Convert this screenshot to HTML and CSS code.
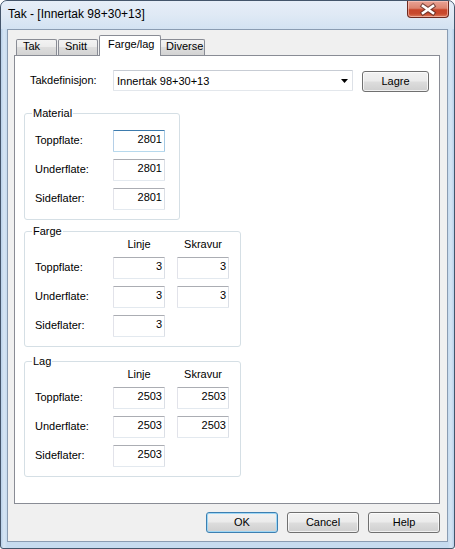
FILE: index.html
```html
<!DOCTYPE html>
<html>
<head>
<meta charset="utf-8">
<link rel="stylesheet" href="styles.css">
</head>
<body>
<div class="window">
  <div class="titlebar">
    <span class="title">Tak - [Innertak 98+30+13]</span>
    <div class="close">
      <svg width="40" height="15" viewBox="0 0 40 15">
        <path d="M15 4 L25 11 M25 4 L15 11" stroke="#5a2e28" stroke-width="4.6" stroke-linecap="square" fill="none" opacity="0.75"/>
        <path d="M15 4 L25 11 M25 4 L15 11" stroke="#ffffff" stroke-width="2.6" stroke-linecap="square" fill="none"/>
      </svg>
    </div>
  </div>
  <div class="client">
    <div class="tabs">
      <div class="tab t-tak">Tak</div>
      <div class="tab t-snitt">Snitt</div>
      <div class="tab active">Farge/lag</div>
      <div class="tab t-div">Diverse</div>
    </div>
    <div class="panel">
      <div class="defrow">
        <span class="deflabel">Takdefinisjon:</span>
        <div class="combo">
          <span>Innertak 98+30+13</span>
          <svg class="arrow" width="7" height="4" viewBox="0 0 7 4"><polygon points="0,0 7,0 3.5,4" fill="#000"/></svg>
        </div>
        <div class="btn lagre">Lagre</div>
      </div>

      <div class="group g-material">
        <span class="glabel">Material</span>
        <div class="grid grid-1">
          <span class="lbl">Toppflate:</span><div class="field focus">2801</div>
          <span class="lbl">Underflate:</span><div class="field">2801</div>
          <span class="lbl">Sideflater:</span><div class="field">2801</div>
        </div>
      </div>

      <div class="group g-farge">
        <span class="glabel">Farge</span>
        <div class="grid grid-2">
          <span></span><span class="hdr">Linje</span><span class="hdr">Skravur</span>
          <span class="lbl">Toppflate:</span><div class="field">3</div><div class="field">3</div>
          <span class="lbl">Underflate:</span><div class="field">3</div><div class="field">3</div>
          <span class="lbl">Sideflater:</span><div class="field">3</div><span></span>
        </div>
      </div>

      <div class="group g-lag">
        <span class="glabel">Lag</span>
        <div class="grid grid-2">
          <span></span><span class="hdr">Linje</span><span class="hdr">Skravur</span>
          <span class="lbl">Toppflate:</span><div class="field">2503</div><div class="field">2503</div>
          <span class="lbl">Underflate:</span><div class="field">2503</div><div class="field">2503</div>
          <span class="lbl">Sideflater:</span><div class="field">2503</div><span></span>
        </div>
      </div>
    </div>
    <div class="buttons">
      <div class="btn default">OK</div>
      <div class="btn">Cancel</div>
      <div class="btn">Help</div>
    </div>
  </div>
</div>
</body>
</html>
```

FILE: styles.css
```css
* { box-sizing: border-box; }
html, body { margin: 0; padding: 0; background: #ffffff; }
body {
  font-family: "Liberation Sans", Arial, sans-serif;
  font-size: 11px;
  color: #000;
}
.window {
  width: 455px;
  height: 549px;
  border: 1px solid #44556b;
  border-radius: 7px 7px 3px 3px;
  background: linear-gradient(90deg, #b9d1ea 0, #d6e5f4 3px, #c6dbef 6px, #c6dbef calc(100% - 6px), #d6e5f4 calc(100% - 3px), #b9d1ea 100%);
  padding: 0 6px 6px 6px;
  display: flex;
  flex-direction: column;
  overflow: hidden;
  position: relative;
}
.titlebar {
  height: 28px;
  margin: 0 -6px;
  padding: 0 5px 0 7px;
  display: flex;
  justify-content: space-between;
  align-items: flex-start;
  background: linear-gradient(180deg, #e6eef8 0, #dfe9f5 50%, #d3e2f2 100%);
  border-radius: 6px 6px 0 0;
}
.title {
  font-family: "Liberation Sans", Arial, sans-serif;
  font-size: 12px;
  line-height: 16px;
  margin-top: 5px;
  color: #000;
}
.close {
  width: 42px;
  height: 17px;
  border: 1px solid #6e2a20;
  border-top: none;
  border-radius: 0 0 4px 4px;
  background: linear-gradient(180deg, #e9a395 0, #dd8470 45%, #c8452a 55%, #c94a2e 80%, #de7d5e 100%);
  box-shadow: inset 0 0 0 1px rgba(255,210,200,0.55);
  display: flex;
  align-items: center;
  justify-content: center;
}
.close svg { display: block; }
.client {
  flex: 1;
  border: 1px solid #8a9cb2;
  background: #f0f0f0;
  display: flex;
  flex-direction: column;
}
.tabs {
  display: flex;
  align-items: flex-end;
  height: 20px;
  margin: 5px 0 0 8px;
  position: relative;
  z-index: 1;
}
.tab {
  height: 16px;
  border: 1px solid #898c95;
  border-bottom: none;
  border-radius: 2px 2px 0 0;
  background: linear-gradient(180deg, #f3f3f3 0, #ebebeb 50%, #dddddd 50%, #d3d3d3 100%);
  line-height: 12px;
  padding-left: 6px;
  white-space: nowrap;
}
.t-tak { width: 41px; margin-right: 1px; }
.t-snitt { width: 40px; }
.tab.active {
  width: 62px;
  height: 21px;
  margin-bottom: -1px;
  margin-left: 1px;
  background: #ffffff;
  padding-left: 8px;
  padding-top: 2px;
  position: relative;
  z-index: 2;
}
.t-div { width: 45px; margin-left: -1px; padding-left: 5px; }
.panel {
  height: 449px;
  margin: 0 7px 0 6px;
  border: 1px solid #898c95;
  background: #ffffff;
}
.defrow {
  display: flex;
  align-items: flex-start;
  height: 22px;
  margin-top: 14px;
  padding-left: 15px;
}
.deflabel {
  width: 83px;
  line-height: 20px;
}
.combo {
  width: 240px;
  height: 21px;
  border: 1px solid;
  border-color: #c7ccd4 #dde1e7 #e3e7ec #dde1e7;
  border-radius: 1px;
  background: #fff;
  display: flex;
  align-items: center;
  justify-content: space-between;
  padding: 0 4px 0 3px;
  line-height: 16px;
}
.arrow { display: block; margin-top: 1px; }
.btn {
  width: 72px;
  height: 21px;
  border: 1px solid #707070;
  border-radius: 3px;
  background: linear-gradient(180deg, #f2f2f2 0, #ebebeb 48%, #dddddd 52%, #cfcfcf 100%);
  box-shadow: inset 0 0 0 1px rgba(255,255,255,0.7);
  text-align: center;
  line-height: 18px;
}
.lagre {
  width: 67px;
  margin-left: 9px;
  margin-top: 1px;
}
.btn.default {
  border-color: #3c7fb1;
  box-shadow: inset 0 0 0 1px #9fd7f5;
}
.group {
  position: relative;
  margin-left: 9px;
  border: 1px solid #d5dfe5;
  border-radius: 3px;
}
.glabel {
  position: absolute;
  top: -7px;
  left: 7px;
  background: #ffffff;
  padding: 0 1px;
  line-height: 13px;
}
.g-material {
  width: 156px;
  height: 107px;
  margin-top: 21px;
  padding: 16px 0 0 10px;
}
.g-farge {
  width: 217px;
  height: 116px;
  margin-top: 11px;
  padding: 6px 0 0 10px;
}
.g-lag {
  width: 217px;
  height: 116px;
  margin-top: 14px;
  padding: 6px 0 0 10px;
}
.grid {
  display: grid;
  column-gap: 12px;
  row-gap: 7px;
}
.grid-1 {
  grid-template-columns: 66px 52px;
  grid-template-rows: 22px 22px 22px;
}
.grid-2 {
  grid-template-columns: 66px 52px 52px;
  grid-template-rows: 12px 22px 22px 22px;
}
.lbl {
  line-height: 20px;
  white-space: nowrap;
}
.hdr {
  text-align: center;
  line-height: 12px;
}
.field {
  width: 52px;
  height: 22px;
  border: 1px solid;
  border-color: #abadb3 #dbdfe6 #e3e9ef #e2e3ea;
  border-radius: 1px;
  background: #fff;
  text-align: right;
  padding-right: 2px;
  line-height: 16px;
}
.field.focus {
  border-color: #3d7bad #a4c9e3 #b7d9ed #b5cfe7;
}
.buttons {
  display: flex;
  justify-content: flex-end;
  gap: 9px;
  margin-top: 8px;
  padding-right: 7px;
}
```
